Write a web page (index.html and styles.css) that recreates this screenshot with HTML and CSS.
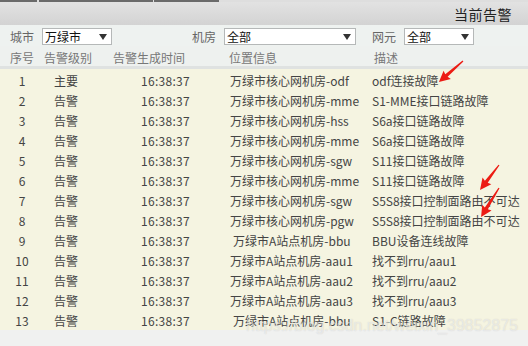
FILE: index.html
```html
<!DOCTYPE html>
<html lang="zh-CN">
<head>
    <meta charset="UTF-8">
    <title>当前告警</title>
    <link rel="stylesheet" href="styles.css">
</head>
<body>
    <div class="tabs">
        <span class="tab t1"></span>
        <span class="tab t2"></span>
        <span class="tab t3"></span>
    </div>
    <header class="titlebar">
        <h1>当前告警</h1>
    </header>

    <div class="filters">
        <label class="lbl">城市</label>
        <div class="select w-small">万绿市<i class="caret"></i></div>
        <label class="lbl room">机房</label>
        <div class="select w-large">全部<i class="caret"></i></div>
        <label class="lbl ne">网元</label>
        <div class="select w-small">全部<i class="caret"></i></div>
    </div>

    <div class="thead">
        <span>序号</span>
        <span>告警级别</span>
        <span>告警生成时间</span>
        <span>位置信息</span>
        <span>描述</span>
    </div>

    <div class="tbody">
        <div class="row"><span class="no">1</span><span>主要</span><span class="time">16:38:37</span><span>万绿市核心网机房-odf</span><span>odf连接故障</span></div>
        <div class="row"><span class="no">2</span><span>告警</span><span class="time">16:38:37</span><span>万绿市核心网机房-mme</span><span>S1-MME接口链路故障</span></div>
        <div class="row"><span class="no">3</span><span>告警</span><span class="time">16:38:37</span><span>万绿市核心网机房-hss</span><span>S6a接口链路故障</span></div>
        <div class="row"><span class="no">4</span><span>告警</span><span class="time">16:38:37</span><span>万绿市核心网机房-mme</span><span>S6a接口链路故障</span></div>
        <div class="row"><span class="no">5</span><span>告警</span><span class="time">16:38:37</span><span>万绿市核心网机房-sgw</span><span>S11接口链路故障</span></div>
        <div class="row"><span class="no">6</span><span>告警</span><span class="time">16:38:37</span><span>万绿市核心网机房-mme</span><span>S11接口链路故障</span></div>
        <div class="row"><span class="no">7</span><span>告警</span><span class="time">16:38:37</span><span>万绿市核心网机房-sgw</span><span>S5S8接口控制面路由不可达</span></div>
        <div class="row"><span class="no">8</span><span>告警</span><span class="time">16:38:37</span><span>万绿市核心网机房-pgw</span><span>S5S8接口控制面路由不可达</span></div>
        <div class="row"><span class="no">9</span><span>告警</span><span class="time">16:38:37</span><span class="shift">万绿市A站点机房-bbu</span><span>BBU设备连线故障</span></div>
        <div class="row"><span class="no">10</span><span>告警</span><span class="time">16:38:37</span><span>万绿市A站点机房-aau1</span><span>找不到rru/aau1</span></div>
        <div class="row"><span class="no">11</span><span>告警</span><span class="time">16:38:37</span><span>万绿市A站点机房-aau2</span><span>找不到rru/aau2</span></div>
        <div class="row"><span class="no">12</span><span>告警</span><span class="time">16:38:37</span><span>万绿市A站点机房-aau3</span><span>找不到rru/aau3</span></div>
        <div class="row"><span class="no">13</span><span>告警</span><span class="time">16:38:37</span><span class="shift">万绿市A站点机房-bbu</span><span>S1-C链路故障</span></div>
    </div>

    <div class="watermark">https://blog.csdn.net/weixin_39852875</div>

    <!-- red annotation arrows -->
    <svg class="marks" width="528" height="346" viewBox="0 0 528 346">
        <g fill="#ec1c14">
            <polygon transform="translate(463 61) rotate(138.8)" points="0,-0.6 22,-1.8 21,-5.5 32,0 21,5.5 22,1.8 0,0.6"/>
            <polygon transform="translate(499 165) rotate(127.2)" points="0,-0.6 21,-1.8 20,-5.5 31.4,0 20,5.5 21,1.8 0,0.6"/>
            <polygon transform="translate(499 188) rotate(121.8)" points="0,-0.6 24,-1.8 23,-5.5 34,0 23,5.5 24,1.8 0,0.6"/>
        </g>
    </svg>
</body>
</html>
```

FILE: styles.css
```css
body {
    margin: 0;
    width: 528px;
    height: 346px;
    overflow: hidden;
    position: relative;
    background: #f0f1f0;
    font-family: "Noto Sans CJK SC", "Liberation Sans", sans-serif;
    font-size: 12px;
    color: #444;
}
.tabs {
    display: flex;
    height: 2px;
    background: #dedede;
}
.tab {
    height: 2px;
    background: #6a6a6a;
    margin-right: 2px;
}
.t1 { width: 37px; }
.t2 { width: 114px; margin-right: 1px; }
.t3 { width: 65px; }
.titlebar {
    height: 23px;
    display: flex;
    justify-content: flex-end;
    align-items: center;
    padding-right: 16px;
    background: linear-gradient(#e2e2e2, #d3d3d3);
}
.titlebar h1 {
    margin: 0;
    font-size: 14px;
    font-weight: normal;
    color: #222;
    letter-spacing: 0.5px;
}
.filters {
    box-sizing: border-box;
    height: 21px;
    display: flex;
    align-items: center;
    padding: 2px 0 0 10px;
    background: #eef2f0;
}
.lbl {
    color: #666;
    margin-right: 8px;
}
.lbl.room { margin-left: 80px; }
.lbl.ne { margin-left: 16px; }
.select {
    position: relative;
    height: 15px;
    line-height: 15px;
    background: #fff;
    border: 1px solid #b5b8b8;
    padding-left: 2px;
    color: #111;
    font-size: 12px;
}
.w-small { width: 66px; }
.w-large { width: 128px; }
.caret {
    position: absolute;
    right: 4px;
    top: 5px;
    border-left: 4px solid transparent;
    border-right: 4px solid transparent;
    border-top: 6px solid #333;
}
.thead {
    box-sizing: border-box;
    height: 23px;
    display: grid;
    grid-template-columns: 34px 69px 116px 145px 1fr;
    align-items: center;
    padding: 3px 0 0 10px;
    background: #eef1ef;
    color: #777;
    border-bottom: 3px solid #dfe2e1;
}
.tbody {
    background: #f5f4e1;
    padding-top: 1px;
}
.row {
    height: 20px;
    display: grid;
    grid-template-columns: 44px 97px 89px 142px 1fr;
    align-items: center;
    color: #444;
    white-space: nowrap;
}
.row span:nth-child(2) { padding-left: 10px; }
.no { text-align: center; }
.time { letter-spacing: 0.3px; }
.shift { padding-left: 3px; }
.watermark {
    position: absolute;
    left: 246px;
    top: 317px;
    font-family: "Liberation Sans", sans-serif;
    font-size: 16px;
    color: rgba(255, 255, 255, 0.5);
    text-shadow: 0 0 1px rgba(120, 120, 120, 0.3);
    white-space: nowrap;
}
.marks {
    position: absolute;
    left: 0;
    top: 0;
    pointer-events: none;
}
```
